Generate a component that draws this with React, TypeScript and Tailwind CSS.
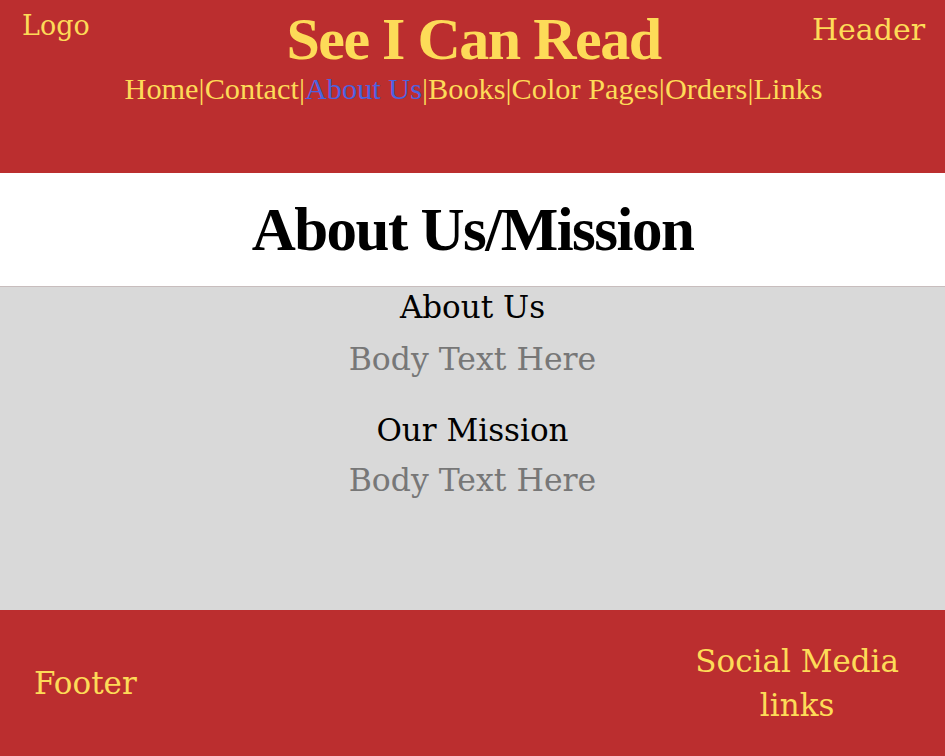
import React from 'react'

const navLinks = ['Home', 'Contact', 'About Us', 'Books', 'Color Pages', 'Orders', 'Links']

export default function App() {
  return (
    <div className="min-h-screen flex flex-col font-['Liberation_Serif',serif]">
      {/* Header */}
      <header className="h-[173px] bg-[#bb2e2f] text-[#fddb58] grid grid-cols-[minmax(0,1fr)_auto_minmax(0,1fr)] items-start pl-[22px] pr-[20px] pt-[8px]">
        <div className="flex justify-start font-['DejaVu_Serif',serif] text-[27px] leading-[36px] whitespace-nowrap">Logo</div>
        <div className="flex flex-col items-center">
          <h1 className="text-[60px] leading-[62px] font-bold tracking-tight whitespace-nowrap">See I Can Read</h1>
          <nav className="text-[30.3px] leading-[30px] mt-[4px] whitespace-nowrap">
            {navLinks.map((link, i) => (
              <span key={link}>
                {i > 0 && '|'}
                <a className={link === 'About Us' ? 'text-[#4b63e0]' : ''}>{link}</a>
              </span>
            ))}
          </nav>
        </div>
        <div className="flex justify-end font-['DejaVu_Serif',serif] text-[30px] leading-[40px] pt-[2px] whitespace-nowrap">Header</div>
      </header>

      {/* Page title */}
      <section className="h-[114px] bg-white flex items-center justify-center border-b border-[#c8bdbd]">
        <h2 className="text-[61px] leading-none font-bold tracking-tight">About Us/Mission</h2>
      </section>

      {/* Content */}
      <main className="h-[323px] bg-[#d9d9d9] flex flex-col items-center text-center font-['DejaVu_Serif',serif]">
        <h3 className="text-[31px] leading-[40px] text-black">About Us</h3>
        <p className="text-[31.5px] leading-[40px] text-[#777777] mt-[12px]">Body Text Here</p>
        <h3 className="text-[31px] leading-[40px] text-black mt-[31px]">Our Mission</h3>
        <p className="text-[31.5px] leading-[40px] text-[#777777] mt-[10px]">Body Text Here</p>
      </main>

      {/* Footer */}
      <footer className="flex-1 min-h-[146px] bg-[#bb2e2f] text-[#fddb58] flex items-center justify-between pl-[34px] pr-[46px] font-['DejaVu_Serif',serif]">
        <div className="text-[31px]">Footer</div>
        <div className="text-[31px] leading-[44px] text-center">
          Social Media
          <br />
          links
        </div>
      </footer>
    </div>
  )
}
